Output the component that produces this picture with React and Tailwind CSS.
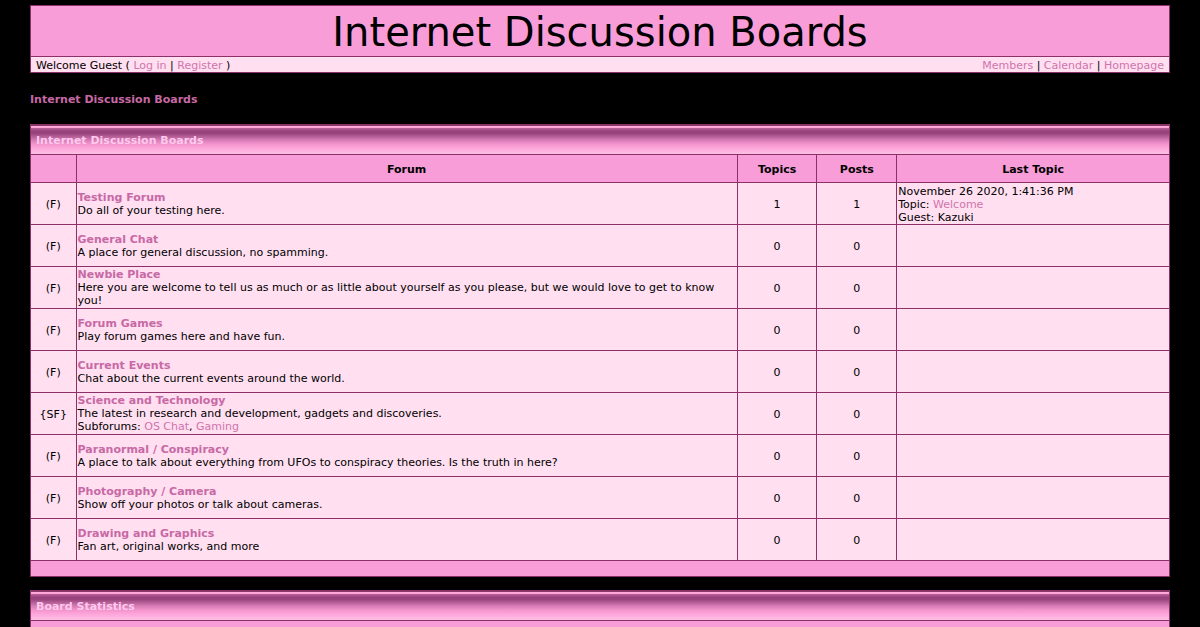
const FORUMS = [
  {
    mark: '(F)', name: 'Testing Forum', text: 'Do all of your testing here.', topics: 1, posts: 1,
    last: { date: 'November 26 2020, 1:41:36 PM', topic: 'Welcome', author: 'Guest: Kazuki' },
  },
  { mark: '(F)', name: 'General Chat', text: 'A place for general discussion, no spamming.', topics: 0, posts: 0 },
  {
    mark: '(F)', name: 'Newbie Place', topics: 0, posts: 0,
    text: 'Here you are welcome to tell us as much or as little about yourself as you please, but we would love to get to know you!',
  },
  { mark: '(F)', name: 'Forum Games', text: 'Play forum games here and have fun.', topics: 0, posts: 0 },
  { mark: '(F)', name: 'Current Events', text: 'Chat about the current events around the world.', topics: 0, posts: 0 },
  {
    mark: '{SF}', name: 'Science and Technology', text: 'The latest in research and development, gadgets and discoveries.',
    topics: 0, posts: 0, subforums: ['OS Chat', 'Gaming'],
  },
  {
    mark: '(F)', name: 'Paranormal / Conspiracy', topics: 0, posts: 0,
    text: 'A place to talk about everything from UFOs to conspiracy theories. Is the truth in here?',
  },
  { mark: '(F)', name: 'Photography / Camera', text: 'Show off your photos or talk about cameras.', topics: 0, posts: 0 },
  { mark: '(F)', name: 'Drawing and Graphics', text: 'Fan art, original works, and more', topics: 0, posts: 0 },
];

function Link({ children, bold }) {
  return (
    <a href="#" className={bold ? 'font-bold text-[#c769a5]' : 'text-[#cf74ad]'}>
      {children}
    </a>
  );
}

function PanelTitle({ children }) {
  return (
    <h2 className="flex h-[30px] items-center border border-b-0 border-[#8b3068] bg-[linear-gradient(to_bottom,#873a66_0px,#873a66_1px,#ffb0de_1px,#ff9fd8_3px,#b8629a_3px,#9a437d_6px,#96417b_8px,#b05a92_11px,#d67bb5_15px,#f394cc_19px,#fda5dc_23px,#ffc0e4_29px)] px-[5px] pt-[2px] text-[11px] font-bold text-[#ffc9ee]">
      {children}
    </h2>
  );
}

export default function App() {
  return (
    <div className="h-screen overflow-hidden bg-black pt-[5px] font-[Verdana,'DejaVu_Sans',sans-serif] text-[11px] leading-[13px] text-black">
      <div className="mx-auto w-[95%]">
        <header className="border border-[#8b3068] bg-[#f99dd8]">
          <h1 className="pt-[2px] text-center text-[40px] leading-[48px]">Internet Discussion Boards</h1>
          <div className="flex justify-between border-t border-[#8b3068] bg-[#ffdff0] px-[5px] pt-[2px]">
            <p>
              Welcome Guest ( <Link>Log in</Link> | <Link>Register</Link> )
            </p>
            <nav>
              <Link>Members</Link> | <Link>Calendar</Link> | <Link>Homepage</Link>
            </nav>
          </div>
        </header>

        <nav className="pt-5 pb-[18px]">
          <Link bold>Internet Discussion Boards</Link>
        </nav>

        <main className="flex flex-col gap-[13px]">
          <section>
            <PanelTitle>Internet Discussion Boards</PanelTitle>
            <table className="w-full table-fixed border-collapse bg-[#ffdff0] [&_td]:border [&_td]:border-[#8b3068] [&_td]:px-px [&_th]:border [&_th]:border-[#8b3068] [&_th]:pt-[2px]">
              <colgroup>
                <col className="w-[4%]" />
                <col className="w-[58.05%]" />
                <col className="w-[7%]" />
                <col className="w-[7%]" />
                <col className="w-[23.95%]" />
              </colgroup>
              <thead>
                <tr className="h-7 bg-[#f99dd8]">
                  <th></th>
                  <th>Forum</th>
                  <th>Topics</th>
                  <th>Posts</th>
                  <th>Last Topic</th>
                </tr>
              </thead>
              <tbody>
                {FORUMS.map((f) => (
                  <tr key={f.name} className="h-[42px]">
                    <td className="pt-[2px] text-center">{f.mark}</td>
                    <td className="py-px">
                      <Link bold>{f.name}</Link>
                      <br />
                      {f.text}
                      {f.subforums && (
                        <div>
                          Subforums: <Link>{f.subforums[0]}</Link>, <Link>{f.subforums[1]}</Link>
                        </div>
                      )}
                    </td>
                    <td className="pt-[2px] text-center">{f.topics}</td>
                    <td className="pt-[2px] text-center">{f.posts}</td>
                    <td className="pt-[2px]">
                      {f.last && (
                        <>
                          {f.last.date}
                          <br />
                          Topic: <Link>{f.last.topic}</Link>
                          <br />
                          {f.last.author}
                        </>
                      )}
                    </td>
                  </tr>
                ))}
              </tbody>
              <tfoot>
                <tr className="h-4 bg-[#f99dd8]">
                  <td colSpan={5}></td>
                </tr>
              </tfoot>
            </table>
          </section>

          <section>
            <PanelTitle>Board Statistics</PanelTitle>
            <div className="h-7 border border-[#8b3068] bg-[#f99dd8]"></div>
          </section>
        </main>
      </div>
    </div>
  );
}
